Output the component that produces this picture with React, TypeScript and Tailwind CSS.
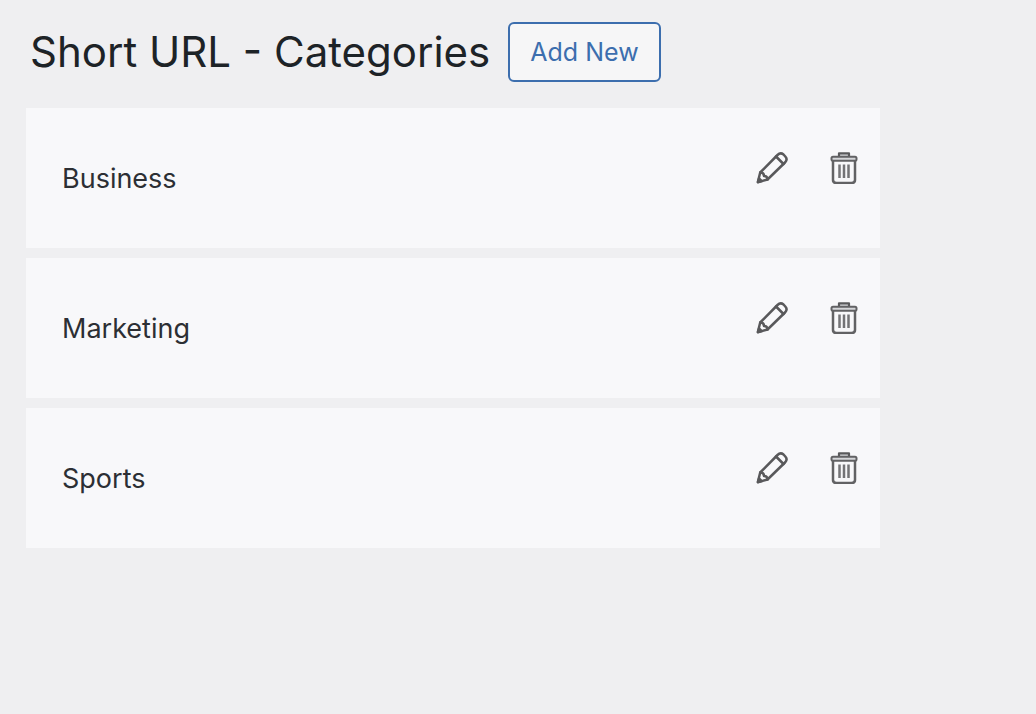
import React from "react";

const categories = ["Business", "Marketing", "Sports"];

function PencilIcon() {
  return (
    <svg viewBox="0 0 32 32" className="size-8" fill="none" stroke="#59595b" strokeWidth="2.5" strokeLinejoin="round" strokeLinecap="round" aria-hidden="true">
      <path d="M1.8 30.2 4.2 20.5 21.5 3Q24.5 0 27.5 2.5L29.3 4.5Q32 7.500 29 10.5L11.5 27.5Z" />
      <path d="M4.2 20.5Q8 20.5 8 24Q11.500 24 11.500 27.500M20 4.500 27.500 12" />
      <path d="M2 30 3 26.5 5.5 29Z" fill="#59595b" />
    </svg>
  );
}

function TrashIcon() {
  return (
    <svg viewBox="0 0 32 32" className="size-8" fill="none" strokeLinejoin="round" strokeLinecap="round" aria-hidden="true">
      <path d="M5 9V28Q5 31 8.500 31H23.500Q27 31 27 28V9" stroke="#626264" strokeWidth="2.5" />
      <path d="M11 4V1.300H21V4" stroke="#59595b" strokeWidth="2.2" fill="#d5d6d8" />
      <rect x="3.5" y="4.700" width="25" height="4" rx="1.5" fill="#d5d6d8" stroke="#626264" strokeWidth="2" />
      <path d="M11.5 12.500V26M16 12.500V26M20.500 12.500V26" stroke="#747477" strokeWidth="2.5" strokeLinecap="butt" />
    </svg>
  );
}

export default function App() {
  return (
    <main className="min-h-screen bg-[#efeff1] pt-[22px] pl-[26px] font-[Inter,sans-serif]">
      <header className="flex items-center gap-[18px] pl-1">
        <h1 className="text-[42px] leading-[60px] text-[#1d2327]">Short URL - Categories</h1>
        <button type="button" className="h-[60px] rounded-md border-2 border-[#3c6eae] bg-[#f6f6f7] px-5 pt-0.5 text-[25px] text-[#3c6eae]">Add New</button>
      </header>
      <ul className="mt-[26px] mr-[156px] flex flex-col gap-[10px]">
        {categories.map((name) => (
          <li key={name} className="flex h-[140px] items-center justify-between bg-[#f8f8fa] pr-5 pl-9">
            <span className="pt-0.5 text-[27px] text-[#2c2f34]">{name}</span>
            <div className="mb-5 flex gap-10">
              <button type="button" aria-label={`Edit ${name}`}><PencilIcon /></button>
              <button type="button" aria-label={`Delete ${name}`}><TrashIcon /></button>
            </div>
          </li>
        ))}
      </ul>
    </main>
  );
}
